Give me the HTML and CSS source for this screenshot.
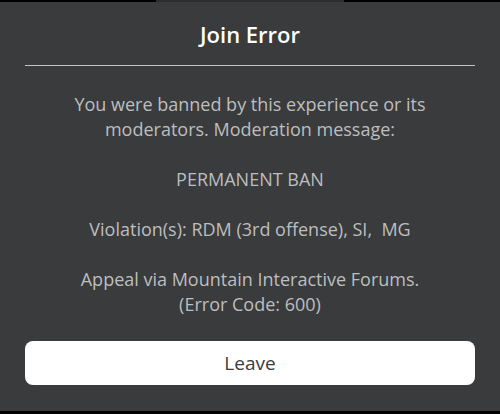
FILE: index.html
```html
<!DOCTYPE html>
<html lang="en">
<head>
  <meta charset="UTF-8">
  <meta name="viewport" content="width=device-width, initial-scale=1">
  <title>Join Error</title>
  <link rel="stylesheet" href="styles.css">
</head>

<body>
  <div class="topbar">
    <div class="topbar-tab"></div>
  </div>

  <div class="dialog">
    <h1 class="title">Join Error</h1>
    <hr class="divider">
    <p class="message">You were banned by this experience or its
moderators. Moderation message:

PERMANENT BAN

Violation(s): RDM (3rd offense), SI,&nbsp; MG

Appeal via Mountain Interactive Forums.
(Error Code: 600)</p>
    <button class="leave-btn">Leave</button>
  </div>
</body>
</html>
```

FILE: styles.css
```css
* {
  box-sizing: border-box;
}

body {
  margin: 0;
  height: 414px;
  background: #000;
  font-family: "Open Sans", Lato, sans-serif;
  overflow: hidden;
}

.topbar {
  height: 2px;
  display: flex;
  justify-content: center;
}

.topbar-tab {
  width: 188px;
  background: #2c2d2f;
}

.dialog {
  height: 409px;
  background: #393b3d;
  padding: 0 25px;
  display: flex;
  flex-direction: column;
}

.title {
  margin: 0;
  padding-top: 17px;
  height: 63px;
  font-size: 22px;
  font-weight: 600;
  color: #fff;
  text-align: center;
  line-height: 30px;
}

.divider {
  margin: 0;
  border: none;
  height: 1px;
  background: #c4c4c4;
}

.message {
  margin: 26px 0 0;
  white-space: pre-line;
  text-align: center;
  font-size: 18px;
  line-height: 25px;
  color: #bdbebf;
}

.leave-btn {
  margin-top: 24px;
  height: 44px;
  border: none;
  border-radius: 8px;
  background: #fff;
  color: #393b3d;
  font: inherit;
  font-size: 19px;
}
```
